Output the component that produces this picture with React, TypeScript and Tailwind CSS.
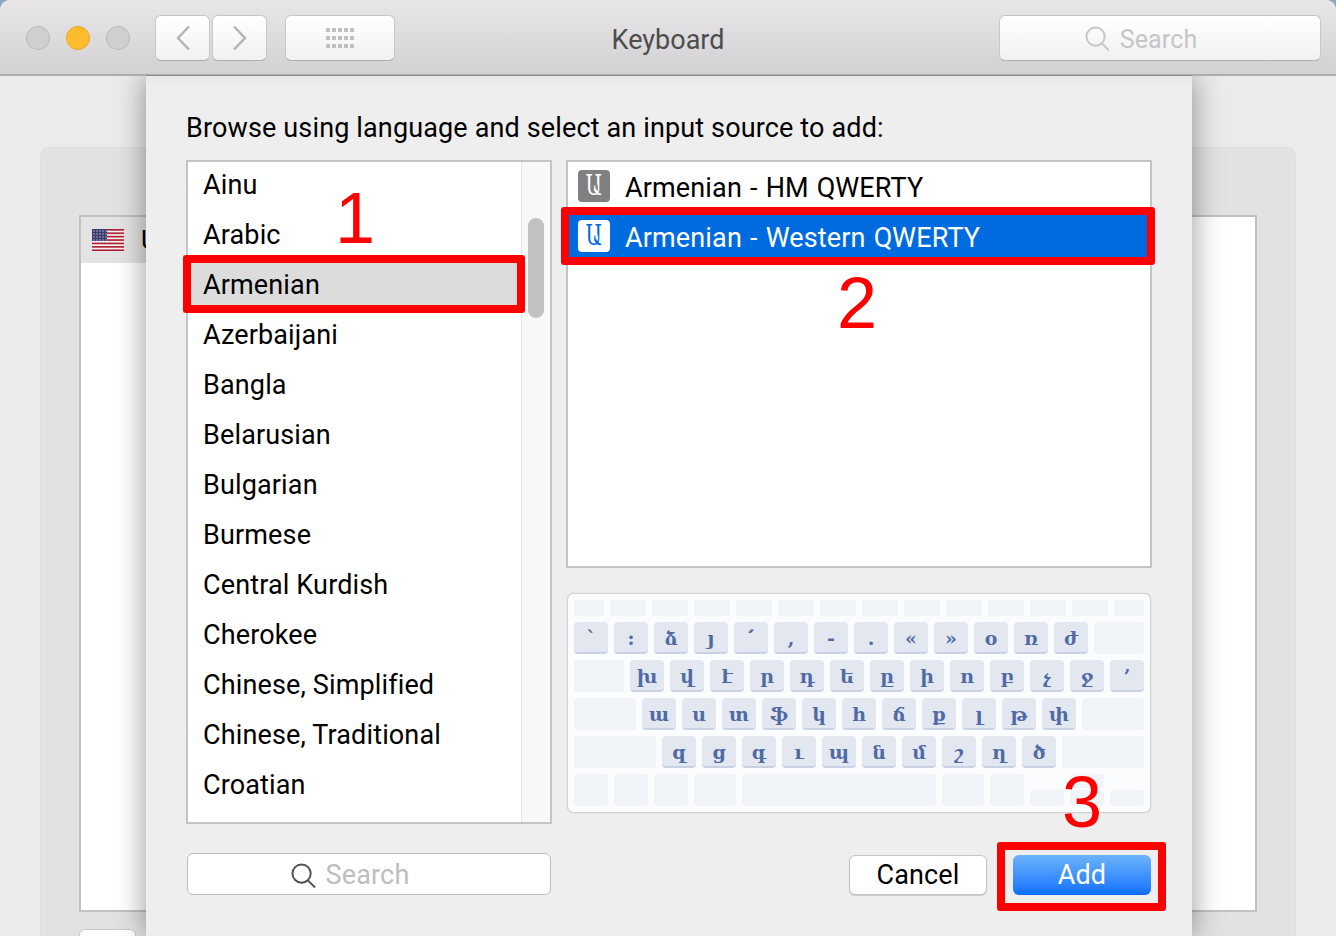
import React from "react";

const langs = ["Ainu","Arabic","Armenian","Azerbaijani","Bangla","Belarusian","Bulgarian","Burmese","Central Kurdish","Cherokee","Chinese, Simplified","Chinese, Traditional","Croatian"];
const r1 = ["`",":","ձ","յ","՛",",","-",".","«","»","օ","ռ","ժ"];
const r2 = ["խ","վ","է","ր","դ","ե","ը","ի","ո","բ","չ","ջ","’"];
const r3 = ["ա","ս","տ","ֆ","կ","հ","ճ","ք","լ","թ","փ"];
const r4 = ["զ","ց","գ","ւ","պ","ն","մ","շ","ղ","ծ"];
const fnKeys = [30,36,36,36,36,36,36,36,36,36,36,36,36,30];

function Key({ c }: { c: string }) {
  return <div className="w-[34px] h-[32px] shrink-0 rounded-[4px] bg-[#e3e7f0] border-b-2 border-[#c9d2e4] pt-[3px] flex items-center justify-center font-['DejaVu_Serif',serif] font-bold text-[19px] leading-none tracking-normal text-[#506aa6]">{c}</div>;
}
function Blank({ w, h = 32 }: { w: number; h?: number }) {
  return <div className="shrink-0 rounded-[4px] bg-[#f0f3f8]" style={{ width: w, height: h }} />;
}
function Row({ children }: { children: React.ReactNode }) {
  return <div className="flex gap-[6px]">{children}</div>;
}
function Keyboard() {
  return (
    <div className="mt-[26px] ml-[2px] w-[582px] h-[218px] rounded-[5px] bg-[#fbfcfe] shadow-[0_0_2px_rgba(0,0,0,0.45)] p-[6px] flex flex-col gap-[6px]">
      <Row>{fnKeys.map((w, i) => <Blank key={i} w={w} h={16} />)}</Row>
      <Row>{r1.map((c, i) => <Key key={i} c={c} />)}<Blank w={50} /></Row>
      <Row><Blank w={50} />{r2.map((c, i) => <Key key={i} c={c} />)}</Row>
      <Row><Blank w={62} />{r3.map((c, i) => <Key key={i} c={c} />)}<Blank w={62} /></Row>
      <Row><Blank w={82} />{r4.map((c, i) => <Key key={i} c={c} />)}<Blank w={82} /></Row>
      <Row>
        <Blank w={34} /><Blank w={34} /><Blank w={34} /><Blank w={42} /><Blank w={194} /><Blank w={42} /><Blank w={34} />
        <div className="w-[34px] pt-[16px]"><Blank w={34} h={16} /></div>
        <div className="w-[34px] flex flex-col gap-[2px]"><Blank w={34} h={14} /><Blank w={34} h={16} /></div>
        <div className="w-[34px] pt-[16px]"><Blank w={34} h={16} /></div>
      </Row>
    </div>
  );
}
function SearchIcon({ color, size }: { color: string; size: number }) {
  return (
    <svg width={size} height={size} viewBox="0 0 26 26" fill="none" stroke={color} strokeWidth="2">
      <circle cx="11" cy="11" r="9.5" />
      <path d="M17.5 18 L25 25.5" />
    </svg>
  );
}
function Flag() {
  const stripes = [];
  for (let i = 0; i < 7; i++) stripes.push(<rect key={i} x="0" y={i * 3.4} width="32" height="1.7" fill="#b22234" />);
  return (
    <svg width="32" height="22" viewBox="0 0 32 22">
      <rect width="32" height="22" fill="#f4f4f4" />
      {stripes}
      <rect width="15" height="12" fill="#3c3b6e" />
      <g fill="#c8c8e8">
        {[2,5,8,11,14].map((x) => [2,5,8,11].map((y) => <rect key={x + "-" + y} x={x - 0.6} y={y - 0.6} width="1.2" height="1.2" />))}
      </g>
    </svg>
  );
}
function InputIcon({ selected }: { selected?: boolean }) {
  return (
    <div className={"mb-[4px] w-[32px] h-[32px] rounded-[4px] flex items-center justify-center font-['DejaVu_Serif',serif] text-[24px] leading-none tracking-normal " + (selected ? "bg-white text-[#006bde]" : "bg-[#808080] text-white")}>
      <span className="inline-block scale-x-[0.85] scale-y-[1.15]">Ա</span>
    </div>
  );
}
function RedBox({ cls }: { cls: string }) {
  return <div className={"absolute z-30 border-[8px] border-[#ff0000] rounded-[3px] " + cls} />;
}
function Num({ cls, n }: { cls: string; n: string }) {
  return <div className={"absolute z-30 font-['Liberation_Sans',sans-serif] text-[72px] leading-none tracking-normal text-[#ff0000] " + cls}>{n}</div>;
}

export default function App() {
  return (
    <div className="relative w-[1336px] h-[936px] overflow-hidden bg-[#8fa8c4] font-[Roboto,sans-serif] tracking-[0.14px]">
      <div className="h-full flex flex-col rounded-t-[10px] overflow-hidden bg-[#ebebeb]">
        {/* toolbar */}
        <div className="relative z-20 h-[76px] shrink-0 flex items-center pt-[2px] pl-[26px] pr-[15px] bg-gradient-to-b from-[#e9e7e9] to-[#d2d0d2] border-b-2 border-[#aeacae]">
          <div className="flex gap-[16px]">
            <div className="w-[24px] h-[24px] rounded-full bg-[#d0d0d0] border border-[#b8b8b8]" />
            <div className="w-[24px] h-[24px] rounded-full bg-[#fdbc2e] border border-[#eaa91e]" />
            <div className="w-[24px] h-[24px] rounded-full bg-[#d0d0d0] border border-[#b8b8b8]" />
          </div>
          <div className="ml-[25px] flex gap-[2px]">
            <div className="w-[55px] h-[46px] rounded-[6px] bg-gradient-to-b from-white to-[#f1f1f1] border border-[#c8c6c8] border-b-[#b0aeb0] flex items-center justify-center">
              <svg width="16" height="26" viewBox="0 0 16 26" fill="none" stroke="#b4b4b4" strokeWidth="2.5"><path d="M14 1.5 L3 13 L14 24.5" /></svg>
            </div>
            <div className="w-[55px] h-[46px] rounded-[6px] bg-gradient-to-b from-white to-[#f1f1f1] border border-[#c8c6c8] border-b-[#b0aeb0] flex items-center justify-center">
              <svg width="16" height="26" viewBox="0 0 16 26" fill="none" stroke="#b4b4b4" strokeWidth="2.5"><path d="M2 1.5 L13 13 L2 24.5" /></svg>
            </div>
          </div>
          <div className="ml-[18px] w-[110px] h-[46px] rounded-[6px] bg-gradient-to-b from-white to-[#f1f1f1] border border-[#c8c6c8] border-b-[#b0aeb0] flex items-center justify-center">
            <div className="grid grid-cols-5 gap-x-[2px] gap-y-[4px]">
              {Array.from({ length: 15 }).map((_, i) => <div key={i} className="w-[4px] h-[4px] bg-[#c0c0c0]" />)}
            </div>
          </div>
          <div className="flex-1 text-center text-[27px] text-[#4d4d4d] pt-[5px] pr-[58px] tracking-normal">Keyboard</div>
          <div className="w-[322px] h-[46px] rounded-[6px] bg-gradient-to-b from-white to-[#f1f1f1] border border-[#c8c6c8] border-b-[#b0aeb0] flex items-center justify-center gap-[10px] pr-[38px] text-[25px] text-[#c6c6c6]">
            <SearchIcon color="#c6c6c6" size={25} />
            <span className="pt-[3px]">Search</span>
          </div>
        </div>
        {/* background preference pane */}
        <div className="flex-1 pt-[71px] pl-[40px] pr-[40px]">
          <div className="h-full rounded-[8px] bg-[#e2e2e2] border border-[#dedede] pt-[67px] px-[38px]">
            <div className="h-[697px] border-2 border-[#c2c2c2] bg-white">
              <div className="h-[46px] w-[300px] bg-[#e3e3e3] flex items-center pl-[11px] gap-[17px] text-[26px] text-black">
                <Flag />
                <span>U.S.</span>
              </div>
            </div>
            <div className="mt-[17px] w-[57px] h-[20px] bg-white rounded-t-[6px] border border-[#c8c8c8]" />
          </div>
        </div>
      </div>

      {/* modal sheet */}
      <div className="absolute z-10 left-[146px] top-[76px] w-[1046px] h-[860px] bg-gradient-to-b from-[#e6e6e6] via-[#eeeeee] via-[1%] to-[#eeeeee] shadow-[0_0_28px_rgba(0,0,0,0.42)] pl-[40px] pr-[40px]">
        <div className="pt-[34px] h-[84px] text-[27px] leading-[36px] text-black">Browse using language and select an input source to add:</div>
        <div className="flex gap-[14px] items-start">
          <div className="w-[366px] h-[664px] border-2 border-[#c4c4c4] bg-white flex overflow-hidden">
            <div className="w-[333px] -mt-[3px]">
              {langs.map((l) => (
                <div key={l} className={"h-[50px] pl-[15px] pt-[2px] flex items-center text-[27px] text-black " + (l === "Armenian" ? "bg-[#dcdcdc]" : "")}>{l}</div>
              ))}
            </div>
            <div className="relative flex-1 bg-[#f8f8f8] border-l border-[#e6e6e6] pt-[56px] pl-[6px]">
              <div className="w-[16px] h-[100px] rounded-full bg-[#c2c2c2]" />
            </div>
          </div>
          <div className="w-[586px]">
            <div className="h-[408px] border-2 border-[#c4c4c4] bg-white">
              <div className="h-[50px] flex items-center gap-[15px] pl-[10px] pt-[2px] text-[27px] text-black [word-spacing:1.2px]"><InputIcon /><span>Armenian - HM QWERTY</span></div>
              <div className="h-[50px] flex items-center gap-[15px] pl-[10px] pt-[2px] text-[27px] text-white bg-[#006bde] [word-spacing:1.2px]"><InputIcon selected /><span>Armenian - Western QWERTY</span></div>
            </div>
            <Keyboard />
          </div>
        </div>
        <div className="mt-[29px] flex items-center">
          <div className="w-[364px] h-[42px] ml-[1px] rounded-[6px] bg-white border border-[#bdbdbd] flex items-center justify-center gap-[10px] pr-[38px] pt-[2px] text-[27px] text-[#bdbdbd]">
            <SearchIcon color="#4f4f4f" size={25} />
            <span>Search</span>
          </div>
          <div className="mt-[2px] ml-[298px] w-[138px] h-[40px] rounded-[6px] bg-white border border-[#c4c4c4] shadow-[0_1px_1px_rgba(0,0,0,0.15)] flex items-center justify-center text-[27px] text-black">Cancel</div>
          <div className="mt-[2px] ml-[26px] w-[138px] h-[40px] rounded-[6px] bg-gradient-to-b from-[#6cb3fa] to-[#0a6ffd] flex items-center justify-center text-[27px] text-white">Add</div>
        </div>
      </div>

      {/* annotations */}
      <div className="absolute z-30 left-[146px] top-[75px] w-[1046px] h-[1px] bg-[#8a8a8a]" />
      <RedBox cls="left-[183px] top-[255px] w-[342px] h-[58px]" />
      <RedBox cls="left-[561px] top-[207px] w-[594px] h-[58px]" />
      <RedBox cls="left-[997px] top-[842px] w-[169px] h-[69px]" />
      <Num cls="left-[335px] top-[182px]" n="1" />
      <Num cls="left-[837px] top-[267px]" n="2" />
      <Num cls="left-[1062px] top-[766px]" n="3" />
    </div>
  );
}
